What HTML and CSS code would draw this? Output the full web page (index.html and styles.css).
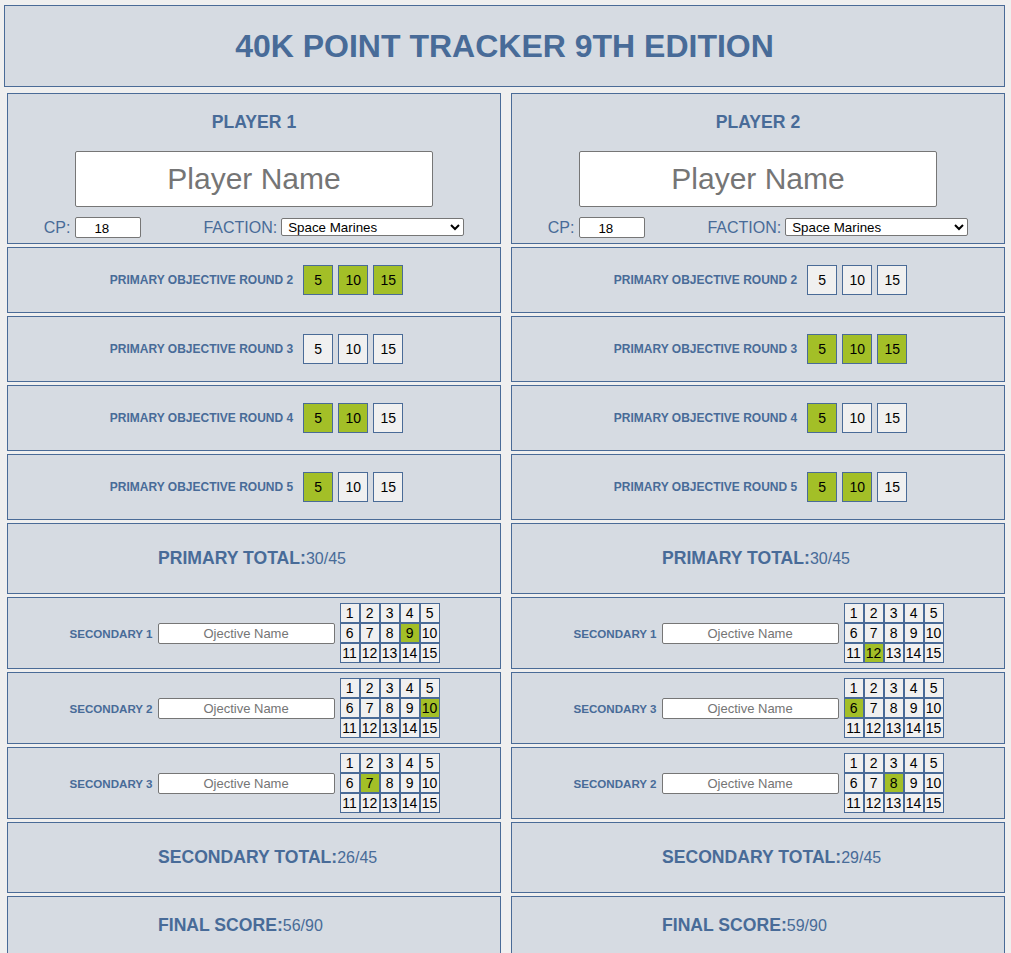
FILE: index.html
```html
<!DOCTYPE html>
<html>
<head>
<meta charset="utf-8">
<title>40K Point Tracker</title>
<link rel="stylesheet" href="styles.css">
</head>
<body>
<header class="panel header"><h1 class="title">40K POINT TRACKER 9TH EDITION</h1></header>
<main class="columns">
  <section class="column">
    <div class="panel player">
      <h2 class="player-title">PLAYER 1</h2>
      <input class="name-input" type="text" placeholder="Player Name">
      <div class="meta-row">
        <label class="meta-label">CP: <input class="cp-input" type="text" value="18"></label>
        <label class="meta-label faction">FACTION: <select class="faction-select"><option>Space Marines</option></select></label>
      </div>
    </div>
    <div class="panel primary"><span class="row-label">PRIMARY OBJECTIVE ROUND 2</span><div class="btns"><span class="btn on">5</span><span class="btn on">10</span><span class="btn on">15</span></div></div>
    <div class="panel primary"><span class="row-label">PRIMARY OBJECTIVE ROUND 3</span><div class="btns"><span class="btn">5</span><span class="btn">10</span><span class="btn">15</span></div></div>
    <div class="panel primary"><span class="row-label">PRIMARY OBJECTIVE ROUND 4</span><div class="btns"><span class="btn on">5</span><span class="btn on">10</span><span class="btn">15</span></div></div>
    <div class="panel primary"><span class="row-label">PRIMARY OBJECTIVE ROUND 5</span><div class="btns"><span class="btn on">5</span><span class="btn">10</span><span class="btn">15</span></div></div>
    <div class="panel total"><p class="total-text"><span class="total-label">PRIMARY TOTAL:</span><span class="total-value">30/45</span></p></div>
    <div class="panel secondary"><span class="row-label sec">SECONDARY 1</span><input class="obj-input" type="text" placeholder="Ojective Name">
      <div class="grid"><span class="cell">1</span><span class="cell">2</span><span class="cell">3</span><span class="cell">4</span><span class="cell">5</span><span class="cell">6</span><span class="cell">7</span><span class="cell">8</span><span class="cell on">9</span><span class="cell">10</span><span class="cell">11</span><span class="cell">12</span><span class="cell">13</span><span class="cell">14</span><span class="cell">15</span></div></div>
    <div class="panel secondary"><span class="row-label sec">SECONDARY 2</span><input class="obj-input" type="text" placeholder="Ojective Name">
      <div class="grid"><span class="cell">1</span><span class="cell">2</span><span class="cell">3</span><span class="cell">4</span><span class="cell">5</span><span class="cell">6</span><span class="cell">7</span><span class="cell">8</span><span class="cell">9</span><span class="cell on">10</span><span class="cell">11</span><span class="cell">12</span><span class="cell">13</span><span class="cell">14</span><span class="cell">15</span></div></div>
    <div class="panel secondary"><span class="row-label sec">SECONDARY 3</span><input class="obj-input" type="text" placeholder="Ojective Name">
      <div class="grid"><span class="cell">1</span><span class="cell">2</span><span class="cell">3</span><span class="cell">4</span><span class="cell">5</span><span class="cell">6</span><span class="cell on">7</span><span class="cell">8</span><span class="cell">9</span><span class="cell">10</span><span class="cell">11</span><span class="cell">12</span><span class="cell">13</span><span class="cell">14</span><span class="cell">15</span></div></div>
    <div class="panel total"><p class="total-text"><span class="total-label">SECONDARY TOTAL:</span><span class="total-value">26/45</span></p></div>
    <div class="panel total final"><p class="total-text"><span class="total-label">FINAL SCORE:</span><span class="total-value">56/90</span></p></div>
  </section>
  <section class="column">
    <div class="panel player">
      <h2 class="player-title">PLAYER 2</h2>
      <input class="name-input" type="text" placeholder="Player Name">
      <div class="meta-row">
        <label class="meta-label">CP: <input class="cp-input" type="text" value="18"></label>
        <label class="meta-label faction">FACTION: <select class="faction-select"><option>Space Marines</option></select></label>
      </div>
    </div>
    <div class="panel primary"><span class="row-label">PRIMARY OBJECTIVE ROUND 2</span><div class="btns"><span class="btn">5</span><span class="btn">10</span><span class="btn">15</span></div></div>
    <div class="panel primary"><span class="row-label">PRIMARY OBJECTIVE ROUND 3</span><div class="btns"><span class="btn on">5</span><span class="btn on">10</span><span class="btn on">15</span></div></div>
    <div class="panel primary"><span class="row-label">PRIMARY OBJECTIVE ROUND 4</span><div class="btns"><span class="btn on">5</span><span class="btn">10</span><span class="btn">15</span></div></div>
    <div class="panel primary"><span class="row-label">PRIMARY OBJECTIVE ROUND 5</span><div class="btns"><span class="btn on">5</span><span class="btn on">10</span><span class="btn">15</span></div></div>
    <div class="panel total"><p class="total-text"><span class="total-label">PRIMARY TOTAL:</span><span class="total-value">30/45</span></p></div>
    <div class="panel secondary"><span class="row-label sec">SECONDARY 1</span><input class="obj-input" type="text" placeholder="Ojective Name">
      <div class="grid"><span class="cell">1</span><span class="cell">2</span><span class="cell">3</span><span class="cell">4</span><span class="cell">5</span><span class="cell">6</span><span class="cell">7</span><span class="cell">8</span><span class="cell">9</span><span class="cell">10</span><span class="cell">11</span><span class="cell on">12</span><span class="cell">13</span><span class="cell">14</span><span class="cell">15</span></div></div>
    <div class="panel secondary"><span class="row-label sec">SECONDARY 3</span><input class="obj-input" type="text" placeholder="Ojective Name">
      <div class="grid"><span class="cell">1</span><span class="cell">2</span><span class="cell">3</span><span class="cell">4</span><span class="cell">5</span><span class="cell on">6</span><span class="cell">7</span><span class="cell">8</span><span class="cell">9</span><span class="cell">10</span><span class="cell">11</span><span class="cell">12</span><span class="cell">13</span><span class="cell">14</span><span class="cell">15</span></div></div>
    <div class="panel secondary"><span class="row-label sec">SECONDARY 2</span><input class="obj-input" type="text" placeholder="Ojective Name">
      <div class="grid"><span class="cell">1</span><span class="cell">2</span><span class="cell">3</span><span class="cell">4</span><span class="cell">5</span><span class="cell">6</span><span class="cell">7</span><span class="cell on">8</span><span class="cell">9</span><span class="cell">10</span><span class="cell">11</span><span class="cell">12</span><span class="cell">13</span><span class="cell">14</span><span class="cell">15</span></div></div>
    <div class="panel total"><p class="total-text"><span class="total-label">SECONDARY TOTAL:</span><span class="total-value">29/45</span></p></div>
    <div class="panel total final"><p class="total-text"><span class="total-label">FINAL SCORE:</span><span class="total-value">59/90</span></p></div>
  </section>
</main>
</body>
</html>
```
FILE: styles.css
```css
* { box-sizing: border-box; }
html, body { margin: 0; }
body {
  background: #efefef;
  padding: 5px 0 0 4px;
  font-family: "Liberation Sans", Arial, sans-serif;
  color: #486b98;
}
.panel {
  background: #d6dbe2;
  border: 1px solid #4a6b97;
}
.header {
  width: 1001px;
  height: 82px;
  display: flex;
  align-items: center;
  justify-content: center;
}
.title {
  margin: 0;
  font-size: 32px;
  line-height: 36px;
  font-weight: bold;
}
.columns {
  display: grid;
  grid-template-columns: 494px 494px;
  column-gap: 10px;
  padding-left: 3px;
  margin-top: 6px;
}
.column {
  display: flex;
  flex-direction: column;
  gap: 3px;
}
.player {
  height: 151px;
  display: flex;
  flex-direction: column;
  align-items: center;
  padding-top: 18px;
}
.player-title {
  margin: 0;
  font-size: 17.6px;
  line-height: 20px;
  font-weight: bold;
}
.name-input {
  margin-top: 19px;
  width: 358px;
  height: 56px;
  border: 1px solid #767676;
  border-radius: 2px;
  background: #fff;
  font-family: "Liberation Sans", Arial, sans-serif;
  font-size: 30px;
  text-align: center;
  padding: 0;
}
.name-input::placeholder, .obj-input::placeholder { color: #757575; }
.meta-row {
  margin-top: 10px;
  display: flex;
  align-items: center;
  gap: 62px;
}
.meta-label {
  font-size: 16px;
  line-height: 21px;
  display: flex;
  align-items: center;
  gap: 5px;
}
.meta-label.faction { gap: 4px; }
.cp-input {
  width: 66px;
  height: 21px;
  border: 1px solid #767676;
  border-radius: 2px;
  background: #fff;
  font-family: "Liberation Sans", Arial, sans-serif;
  font-size: 13.33px;
  color: #000;
  padding: 1px 2px 0 18px;
}
.faction-select {
  width: 183px;
  height: 18px;
  border: 1px solid #767676;
  border-radius: 2px;
  background: #fff;
  font-family: "Liberation Sans", Arial, sans-serif;
  font-size: 13.33px;
  color: #000;
  padding: 0 0 0 2px;
  margin-top: -2px;
}
.primary {
  height: 66px;
  display: flex;
  align-items: center;
  justify-content: center;
  padding-left: 5px;
}
.row-label {
  font-size: 12px;
  font-weight: bold;
  white-space: nowrap;
}
.row-label.sec { font-size: 11.6px; }
.btns {
  display: flex;
  gap: 5px;
  margin-left: 10px;
}
.btn {
  width: 30px;
  height: 30px;
  border: 1px solid #4a6b97;
  background: #f0f0f0;
  color: #000;
  font-size: 14px;
  display: flex;
  align-items: center;
  justify-content: center;
}
.btn.on, .cell.on { background: #a3bf27; }
.total {
  height: 71px;
  display: flex;
  align-items: center;
  padding-left: 150px;
}
.total-text {
  margin: 0;
  line-height: 20px;
  white-space: nowrap;
}
.total-label {
  font-size: 17.6px;
  font-weight: bold;
}
.total-value {
  font-size: 16px;
}
.final {
  align-items: flex-start;
  padding-top: 18px;
}
.secondary {
  height: 72px;
  display: flex;
  align-items: center;
  justify-content: center;
  gap: 5px;
  padding-left: 1px;
}
.obj-input {
  width: 177px;
  height: 21px;
  border: 1px solid #767676;
  border-radius: 2px;
  background: #fff;
  font-family: "Liberation Sans", Arial, sans-serif;
  font-size: 13px;
  text-align: center;
  padding: 0;
}
.grid {
  display: grid;
  grid-template-columns: repeat(5, 20px);
  grid-auto-rows: 20px;
}
.cell {
  border: 1px solid #4a6b97;
  background: #f0f0f0;
  color: #000;
  font-size: 14px;
  display: flex;
  align-items: center;
  justify-content: center;
}
```
